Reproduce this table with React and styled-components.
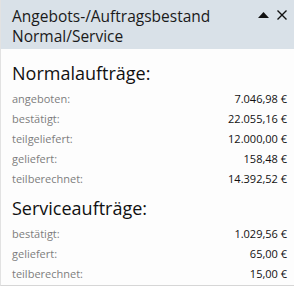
import styled, { createGlobalStyle } from 'styled-components';

const GlobalStyle = createGlobalStyle`
  html, body {
    margin: 0;
    padding: 0;
    background: #ffffff;
  }
  body {
    font-family: 'Open Sans', 'Noto Sans', sans-serif;
  }
`

const normal = [
  ['angeboten:', '7.046,98 €'],
  ['bestätigt:', '22.055,16 €'],
  ['teilgeliefert:', '12.000,00 €'],
  ['geliefert:', '158,48 €'],
  ['teilberechnet:', '14.392,52 €'],
]

const service = [
  ['bestätigt:', '1.029,56 €'],
  ['geliefert:', '65,00 €'],
  ['teilberechnet:', '15,00 €'],
]

function Section({ title, rows }) {
  return (
    <Block>
      <SectionTitle>{title}</SectionTitle>
      {rows.map(([label, value]) => (
        <Row key={label}>
          <Label>{label}</Label>
          <Value>{value}</Value>
        </Row>
      ))}
    </Block>
  )
}

export default function App() {
  return (
    <>
      <GlobalStyle />
      <Panel>
        <Header>
          <Title>
            <div>Angebots-/Auftragsbestand</div>
            <div>Normal/Service</div>
          </Title>
          <Tools>
            <svg width="11" height="6" viewBox="0 0 11 6">
              <polygon points="5.5,0 11,6 0,6" fill="#111" />
            </svg>
            <svg width="10" height="10" viewBox="0 0 10 10">
              <path d="M0.5 0.5L9.5 9.5M9.5 0.5L0.5 9.5" stroke="#111" strokeWidth="1.4" />
            </svg>
          </Tools>
        </Header>
        <Body>
          <Section title="Normalaufträge:" rows={normal} />
          <Section title="Serviceaufträge:" rows={service} />
        </Body>
      </Panel>
    </>
  )
}

const Panel = styled.div`
  width: 294px;
  height: 286px;
  box-sizing: border-box;
  border-left: 1px solid #e2e2e2;
  border-bottom: 1px solid #d6d6d6;
  background: #fdfdfd;
  display: flex;
  flex-direction: column;
`
const Header = styled.div`
  height: 49px;
  flex-shrink: 0;
  background: #d9e1e8;
  display: flex;
  justify-content: space-between;
  align-items: flex-start;
  padding: 6px 7px 0 11px;
  box-sizing: border-box;
`
const Title = styled.div`
  font-size: 15.5px;
  line-height: 20px;
  color: #1a1a1a;
`
const Tools = styled.div`
  display: flex;
  align-items: center;
  gap: 8px;
  padding-top: 4px;
`
const Body = styled.div`
  padding: 10px 7px 0 11px;
  display: flex;
  flex-direction: column;
  gap: 6px;
`
const Block = styled.div`
  display: flex;
  flex-direction: column;
`
const SectionTitle = styled.div`
  font-size: 18px;
  line-height: 28px;
  color: #111;
  margin-bottom: 1px;
`
const Row = styled.div`
  display: flex;
  justify-content: space-between;
  align-items: center;
  height: 20px;
  font-size: 11px;
`
const Label = styled.span`
  color: #7d7d7d;
`
const Value = styled.span`
  color: #111;
`
